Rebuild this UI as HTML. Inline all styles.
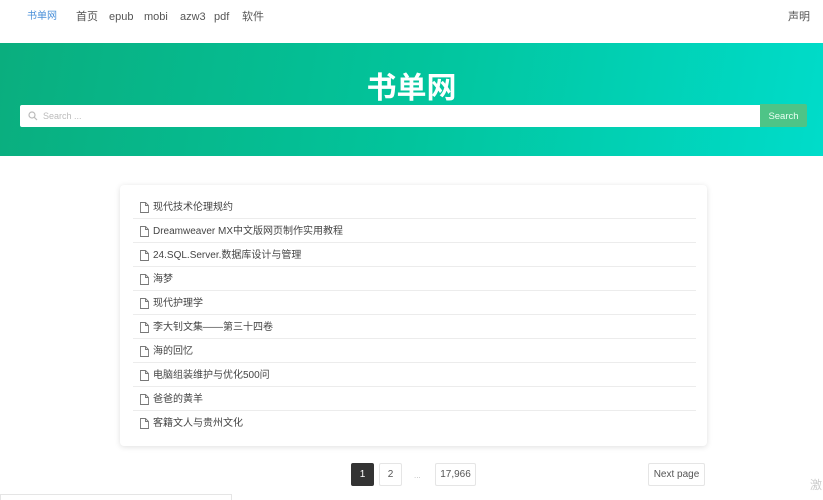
<!DOCTYPE html>
<html><head><meta charset="utf-8"><style>
*{box-sizing:border-box;margin:0;padding:0}
body{width:823px;height:500px;overflow:hidden;background:#fff;font-family:"Liberation Sans","Noto Sans CJK SC",sans-serif;color:#444;position:relative}
.nav{height:43px;position:relative;font-size:11px}
.nav a{position:absolute;top:9px;height:16px;line-height:16px;color:#555;text-decoration:none;white-space:nowrap}
.hero{position:absolute;top:43px;left:0;width:823px;height:113px;background:linear-gradient(100deg,#0aae7e 0%,#02c49c 50%,#00dcca 100%)}
.hero h1{position:absolute;top:28px;width:100%;text-align:center;color:#fff;font-size:30px;font-weight:bold;line-height:36px}
.sb{position:absolute;top:62px;left:20px;width:740px;height:22px;background:#fff;border-radius:2px 0 0 2px}
.sb span{position:absolute;left:23px;top:0;line-height:23px;font-size:9px;color:#bbb}
.btn{position:absolute;top:61px;left:760px;width:47px;height:23px;background:#4ec487;color:#eafff3;font-size:9.5px;text-align:center;line-height:25px;border-radius:0 2px 2px 0}
.card{position:absolute;top:185px;left:120px;width:587px;height:261px;background:#fff;border-radius:4px;box-shadow:0 1px 6px rgba(0,0,0,.13)}
.row{position:absolute;left:13px;width:563px;height:24px;font-size:10px;line-height:26px;color:#444;padding-left:20px;border-bottom:1px solid #ececec}
.row svg{position:absolute;left:7px;top:7px}
.pg{position:absolute;top:463px;height:23px;border:1px solid #e5e5e5;border-radius:2px;font-size:10px;line-height:22px;text-align:center;color:#555;background:#fff}
</style></head><body>
<div class="nav">
<a style="left:27px;color:#4a90d9;font-size:10px">书单网</a>
<a style="left:76px">首页</a><a style="left:109px">epub</a><a style="left:144px">mobi</a><a style="left:180px">azw3</a><a style="left:214px">pdf</a><a style="left:242px">软件</a>
<a style="left:788px">声明</a>
</div>
<div class="hero"><h1>书单网</h1>
<div class="sb"><svg style="position:absolute;left:8px;top:6px" width="10" height="10" viewBox="0 0 10 10"><circle cx="4" cy="4" r="3" fill="none" stroke="#bbb" stroke-width="1.2"/><path d="M6.3 6.3L9 9" stroke="#bbb" stroke-width="1.2"/></svg><span>Search ...</span></div>
<div class="btn">Search</div></div>
<div class="card">
<div class="row" style="top:10px"><svg width="9" height="11" viewBox="0 0 9 11"><path d="M.5.5h5l3 3v7h-8z M5.5.5v3h3" fill="none" stroke="#777" stroke-width=".9"/></svg>现代技术伦理规约</div>
<div class="row" style="top:34px"><svg width="9" height="11" viewBox="0 0 9 11"><path d="M.5.5h5l3 3v7h-8z M5.5.5v3h3" fill="none" stroke="#777" stroke-width=".9"/></svg>Dreamweaver MX中文版网页制作实用教程</div>
<div class="row" style="top:58px"><svg width="9" height="11" viewBox="0 0 9 11"><path d="M.5.5h5l3 3v7h-8z M5.5.5v3h3" fill="none" stroke="#777" stroke-width=".9"/></svg>24.SQL.Server.数据库设计与管理</div>
<div class="row" style="top:82px"><svg width="9" height="11" viewBox="0 0 9 11"><path d="M.5.5h5l3 3v7h-8z M5.5.5v3h3" fill="none" stroke="#777" stroke-width=".9"/></svg>海梦</div>
<div class="row" style="top:106px"><svg width="9" height="11" viewBox="0 0 9 11"><path d="M.5.5h5l3 3v7h-8z M5.5.5v3h3" fill="none" stroke="#777" stroke-width=".9"/></svg>现代护理学</div>
<div class="row" style="top:130px"><svg width="9" height="11" viewBox="0 0 9 11"><path d="M.5.5h5l3 3v7h-8z M5.5.5v3h3" fill="none" stroke="#777" stroke-width=".9"/></svg>李大钊文集——第三十四卷</div>
<div class="row" style="top:154px"><svg width="9" height="11" viewBox="0 0 9 11"><path d="M.5.5h5l3 3v7h-8z M5.5.5v3h3" fill="none" stroke="#777" stroke-width=".9"/></svg>海的回忆</div>
<div class="row" style="top:178px"><svg width="9" height="11" viewBox="0 0 9 11"><path d="M.5.5h5l3 3v7h-8z M5.5.5v3h3" fill="none" stroke="#777" stroke-width=".9"/></svg>电脑组装维护与优化500问</div>
<div class="row" style="top:202px"><svg width="9" height="11" viewBox="0 0 9 11"><path d="M.5.5h5l3 3v7h-8z M5.5.5v3h3" fill="none" stroke="#777" stroke-width=".9"/></svg>爸爸的黄羊</div>
<div class="row" style="top:226px;border-bottom:none"><svg width="9" height="11" viewBox="0 0 9 11"><path d="M.5.5h5l3 3v7h-8z M5.5.5v3h3" fill="none" stroke="#777" stroke-width=".9"/></svg>客籍文人与贵州文化</div>
</div>
<div class="pg" style="left:351px;width:23px;background:#333;border-color:#333;color:#fff">1</div>
<div class="pg" style="left:379px;width:23px">2</div>
<div style="position:absolute;top:463px;left:414px;font-size:8px;line-height:25px;color:#bbb">...</div>
<div class="pg" style="left:435px;width:41px">17,966</div>
<div class="pg" style="left:648px;width:57px">Next page</div>
<div style="position:absolute;left:0;top:494px;width:232px;height:6px;border:1px solid #e5e5e5;border-bottom:none"></div>
<div style="position:absolute;left:810px;top:476px;font-size:12px;color:#ccc">激</div>
</body></html>
